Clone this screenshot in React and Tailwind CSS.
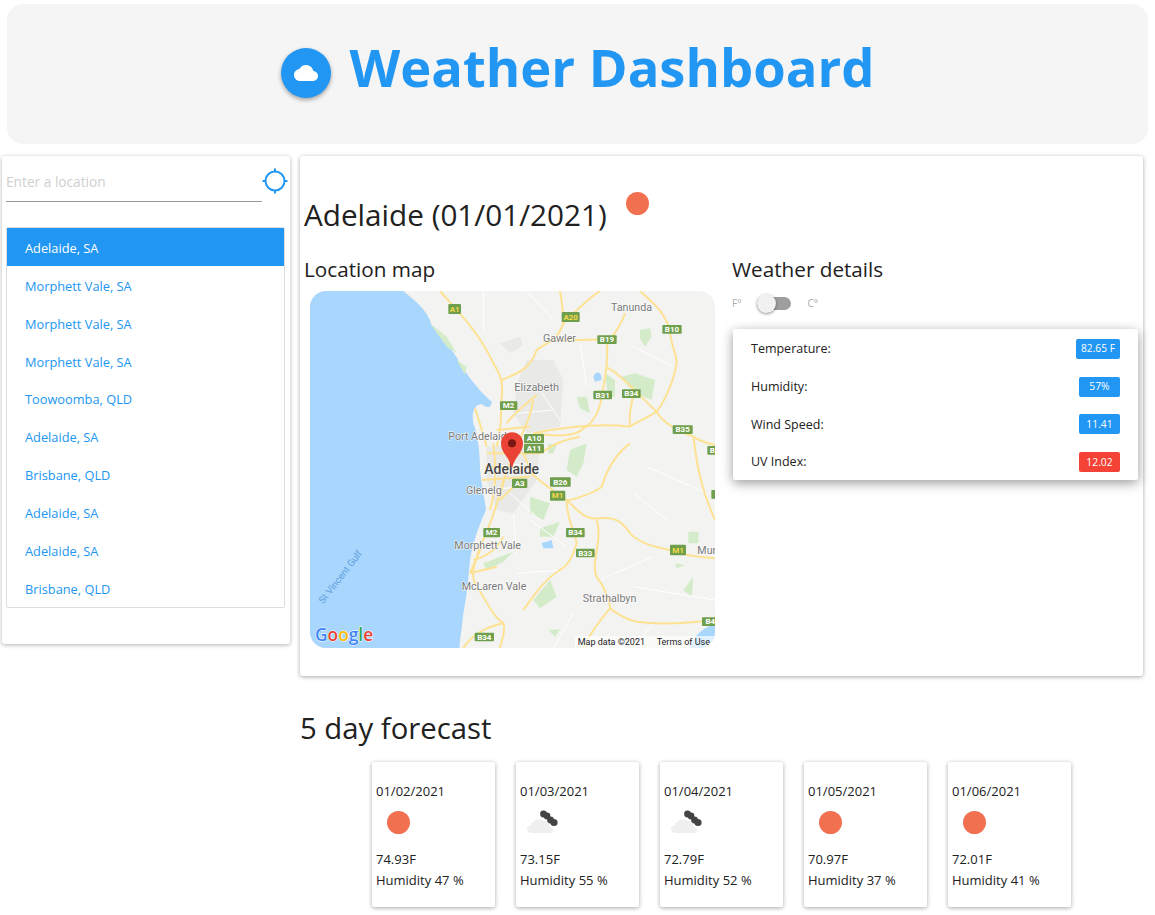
const locations = ['Adelaide, SA', 'Morphett Vale, SA', 'Morphett Vale, SA', 'Morphett Vale, SA', 'Toowoomba, QLD', 'Adelaide, SA', 'Brisbane, QLD', 'Adelaide, SA', 'Adelaide, SA', 'Brisbane, QLD']

const forecast = [
  { date: '01/02/2021', temp: '74.93F', humidity: 47, icon: 'sun' },
  { date: '01/03/2021', temp: '73.15F', humidity: 55, icon: 'cloud' },
  { date: '01/04/2021', temp: '72.79F', humidity: 52, icon: 'cloud' },
  { date: '01/05/2021', temp: '70.97F', humidity: 37, icon: 'sun' },
  { date: '01/06/2021', temp: '72.01F', humidity: 41, icon: 'sun' },
]

const details = [
  { label: 'Temperature:', value: '82.65 F', width: 'w-[44px]', color: 'bg-[#2196f3]' },
  { label: 'Humidity:', value: '57%', width: 'w-[41px]', color: 'bg-[#2196f3]' },
  { label: 'Wind Speed:', value: '11.41', width: 'w-[41px]', color: 'bg-[#2196f3]' },
  { label: 'UV Index:', value: '12.02', width: 'w-[41px]', color: 'bg-[#f44336]' },
]

const shields = [
  ['A1', 445, 72, 38, 30, 1], ['A20', 785, 96, 54, 30, 1], ['B19', 892, 166, 58, 26], ['B10', 1087, 135, 58, 26],
  ['B31', 880, 332, 56, 26], ['B34', 966, 328, 56, 26], ['M2', 600, 364, 52, 26], ['B35', 1118, 436, 60, 26],
  ['A10', 672, 462, 60, 28], ['A11', 672, 492, 60, 28], ['A3', 636, 596, 46, 28], ['B26', 750, 592, 62, 28],
  ['M1', 750, 632, 46, 30, 1], ['M2', 550, 744, 50, 28], ['B34', 798, 744, 56, 28], ['B33', 828, 806, 56, 26],
  ['M1', 1110, 794, 48, 32, 1], ['B34', 524, 1058, 58, 26], ['B4', 1206, 1012, 50, 26], ['B', 1222, 498, 30, 26], ['', 1234, 630, 20, 26],
]

const labels = [
  ['Tanunda', 933, 93, 32], ['Gawler', 729, 185, 32], ['Elizabeth', 643, 333, 33], ['Port Adelaide', 445, 481, 32],
  ['Glenelg', 498, 643, 32], ['Morphett Vale', 463, 806, 32], ['McLaren Vale', 485, 930, 32], ['Strathalbyn', 848, 966, 32], ['Mur', 1192, 823, 32],
]

const roads = [
  'M420 33 C470 90 530 150 570 230 C590 270 610 290 606 340 C600 390 610 430 590 500',
  'M606 300 C650 280 690 270 710 210 C730 190 770 190 790 130 C790 90 785 60 780 33',
  'M790 130 C830 90 860 60 900 33',
  'M730 185 C790 180 860 180 920 178 C925 230 920 270 905 350 C900 390 880 430 850 445',
  'M975 100 C960 150 930 170 920 200',
  'M1020 33 C1060 70 1090 90 1110 150 C1110 190 1130 220 1130 250 C1120 310 1090 370 1070 395 C1090 430 1130 450 1180 470 C1190 550 1200 620 1245 720',
  'M920 262 C960 280 1010 340 1070 395 C1030 420 1000 430 990 440 C900 430 800 440 700 460',
  'M990 440 C985 400 995 370 1000 345',
  'M1180 470 C1210 490 1230 490 1245 495',
  'M990 490 C950 520 920 570 905 620 C880 640 850 650 800 662',
  'M700 585 C740 620 770 640 800 660 C840 700 860 720 900 715 C950 710 970 730 990 760 C1020 790 1060 800 1110 810 C1160 830 1200 830 1245 835',
  'M800 662 C800 720 830 770 830 790 C820 830 800 860 780 870 C730 900 700 950 670 990',
  'M890 720 C910 780 870 850 890 890 C920 930 930 970 930 985 C950 1000 980 1020 1010 1025 C1080 1035 1150 1030 1245 1020',
  'M930 985 C900 1020 870 1060 850 1104',
  'M610 600 C590 680 570 740 540 800 C520 860 510 890 530 920 C560 960 570 1000 610 1030 C620 1060 600 1090 600 1104',
  'M610 1030 C560 1040 520 1060 490 1104',
  'M560 500 C540 430 530 400 525 385',
  'M700 360 C690 420 670 450 640 520 C620 570 610 600 600 650',
  'M700 460 C760 470 830 470 850 445',
  'M720 520 C780 480 800 480 840 470',
  'M560 520 L720 520', 'M555 560 L700 565', 'M545 600 L690 590', 'M580 490 C590 560 590 620 570 690',
  'M620 430 C640 400 680 370 710 345', 'M590 450 L690 440', 'M600 660 L640 620', 'M670 520 L700 590',
  'M520 840 C560 830 590 810 610 770', 'M510 880 L590 860', 'M545 800 L510 880',
]

const minorRoads = [
  'M550 33 L550 150', 'M680 33 L760 120', 'M840 190 L860 320', 'M1000 200 L1120 260', 'M1040 560 L1220 640', 'M1000 640 L1100 720',
  'M900 900 L1060 830', 'M690 720 L800 800', 'M650 880 L790 870', 'M1000 920 L1245 960', 'M820 1000 L760 1104', 'M1060 1030 L1000 1104',
  'M630 640 L720 720', 'M640 700 L650 820', 'M650 400 L760 390', 'M720 330 L780 420', 'M580 560 L690 550', 'M570 630 L660 620',
]

const parks = [
  'M1020 150 L1050 145 L1055 170 L1035 200 L1020 175Z', 'M965 290 L1005 280 L1065 300 L1055 360 L1020 345 L985 320Z', 'M915 280 L945 300 L945 350 L925 355 Z',
  'M830 350 L860 350 L870 400 L840 385Z', 'M745 490 L770 495 L760 520 L745 520Z', 'M810 510 L860 490 L850 550 L830 590 L800 570Z', 'M690 650 L750 670 L730 720 L690 700Z',
  'M720 745 L780 725 L760 770 L720 770Z', 'M1165 755 L1195 755 L1195 790 L1165 790Z', 'M1150 930 L1180 890 L1175 950Z', 'M700 960 L750 900 L770 950 L720 985Z',
  'M745 1050 L780 1048 L765 1070Z', 'M550 850 L640 815 L610 845 L560 870Z', 'M1125 850 L1155 855 L1130 865Z', 'M390 130 L440 170 L470 220 L440 200Z', 'M470 240 L500 260 L495 285 Z',
]

const greys = [
  'M600 190 L660 170 L670 195 L630 220Z', 'M680 240 L760 240 L790 300 L780 440 L680 460 L640 400 L650 310Z', 'M560 500 L720 490 L710 600 L640 700 L590 690 L560 600Z',
]

function CloudGlyph({ className }) {
  return (
    <svg viewBox="0 0 24 24" className={className} fill="currentColor">
      <path d="M19.35 10.04C18.67 6.59 15.64 4 12 4 9.11 4 6.6 5.64 5.35 8.04 2.34 8.36 0 10.91 0 14c0 3.31 2.69 6 6 6h13c2.76 0 5-2.24 5-5 0-2.64-2.05-4.78-4.65-4.96z" />
    </svg>
  )
}

function WeatherIcon({ type }) {
  if (type === 'sun') {
    return (
      <div className="w-[44px] h-[40px] flex items-center justify-center">
        <div className="w-[23px] h-[23px] rounded-full bg-[#f0704f]" />
      </div>
    )
  }
  return (
    <svg viewBox="0 0 44 40" className="w-[44px] h-[40px]">
      <path d="M12 31 C6 31 5 24 11 23 C12.5 19 17 16 21 18 C26 18 29 21 29 25 C33 25 35 31 30 31Z" fill="#efefef" />
      <g fill="#444444">
        <circle cx="23.5" cy="12" r="3.4" />
        <circle cx="27" cy="14" r="3.4" />
        <circle cx="30.5" cy="18" r="3.4" />
        <circle cx="34" cy="20.5" r="3.6" />
      </g>
    </svg>
  )
}

function AdelaideMap() {
  return (
    <svg viewBox="30 33 1215 1071" className="block w-full h-full" fontFamily="Roboto, sans-serif">
      <rect x="30" y="33" width="1215" height="1071" fill="#f3f3f1" />
      <path d="M30 33 L310 33 C340 60 380 85 395 135 C420 170 460 210 480 250 C510 300 545 340 575 365 C575 385 560 385 545 372 C520 375 515 400 520 430 C535 470 540 520 540 570 C545 620 555 660 558 690 C540 730 520 780 510 840 C505 900 500 950 490 1000 C485 1050 480 1080 478 1104 L30 1104 Z" fill="#a8d6fd" />
      <path d="M1180 1080 C1200 1050 1225 1040 1245 1030 L1245 1104 L1170 1104Z" fill="#a8d6fd" />
      <path d="M880 290 C890 270 905 275 905 300 L885 305Z M725 790 L755 780 L760 805 L730 805Z" fill="#a8d6fd" />
      {greys.map((d, i) => <path key={i} d={d} fill="#e9e9e7" />)}
      {parks.map((d, i) => <path key={i} d={d} fill="#d3ebc9" />)}
      {minorRoads.map((d, i) => <path key={i} d={d} stroke="#ffffff" strokeWidth="3" fill="none" />)}
      {roads.map((d, i) => <path key={i} d={d} stroke="#fde293" strokeWidth="6" fill="none" />)}
      {labels.map(([text, x, y, size]) => (
        <text key={text} x={x} y={y} fontSize={size} fill="#777777" stroke="#ffffff" strokeWidth="3" paintOrder="stroke">{text}</text>
      ))}
      <text x="553" y="582" fontSize="42" fontWeight="500" fill="#444444" stroke="#ffffff" strokeWidth="3" paintOrder="stroke">Adelaide</text>
      <text x="0" y="0" fontSize="29" fill="#5f9fe0" transform="translate(70 972) rotate(-52)">St Vincent Gulf</text>
      {shields.map(([text, x, y, w, h, yellow], i) => (
        <g key={i}>
          <rect x={x} y={y} width={w} height={h} rx="3" fill="#6f9f4c" />
          <text x={x + w / 2} y={y + h / 2 + 8} textAnchor="middle" fontSize="24" fontWeight="700" fill={yellow ? '#f5d94a' : '#ffffff'}>{text}</text>
        </g>
      ))}
      <path d="M636 565 C628 530 603 520 603 490 C603 470 618 457 636 457 C654 457 669 470 669 490 C669 520 644 530 636 565Z" fill="#ea4335" />
      <circle cx="636" cy="490" r="12" fill="#7b1610" />
      <text x="45" y="1083" fontSize="52" fontWeight="600" fontFamily="'Open Sans', sans-serif" stroke="#ffffff" strokeWidth="3" paintOrder="stroke">
        <tspan fill="#4285f4">G</tspan><tspan fill="#ea4335">o</tspan><tspan fill="#fbbc05">o</tspan><tspan fill="#4285f4">g</tspan><tspan fill="#34a853">l</tspan><tspan fill="#ea4335">e</tspan>
      </text>
      <rect x="825" y="1068" width="420" height="36" fill="#ffffff" fillOpacity="0.65" />
      <text x="833" y="1095" fontSize="27" fill="#222222">Map data ©2021</text>
      <text x="1070" y="1095" fontSize="27" fill="#222222">Terms of Use</text>
    </svg>
  )
}

export default function App() {
  return (
    <div className="w-[1155px] h-[915px] overflow-hidden bg-white text-[#212121] font-['Open_Sans','Noto_Sans',sans-serif]">
      <header className="ml-[7px] mt-[4px] w-[1141px] h-[140px] rounded-2xl bg-[#f5f5f5] flex items-center justify-center">
        <div className="w-[50px] h-[50px] -mt-[2px] rounded-full bg-[#2196f3] shadow-[0_2px_4px_rgba(0,0,0,0.35)] flex items-center justify-center text-white">
          <CloudGlyph className="w-[24px] h-[24px]" />
        </div>
        <h1 className="ml-[19px] -mt-[14px] text-[52.5px] leading-none font-bold text-[#2196f3]">Weather Dashboard</h1>
      </header>

      <div className="flex items-start mt-[12px]">
        <aside className="ml-[2px] w-[288px] h-[488px] bg-white rounded-[3px] shadow-[0_1px_4px_rgba(0,0,0,0.3)] px-[4px] pt-[10px]">
          <div className="flex items-start">
            <div className="w-[256px] shrink-0 h-[36px] border-b border-[#999999] text-[13.7px] leading-[32px] text-[#cfcfcf]">Enter a location</div>
            <svg viewBox="0 0 26 26" className="w-[26px] h-[26px] shrink-0 mt-[2px]" fill="none" stroke="#2196f3" strokeWidth="2">
              <circle cx="13" cy="13" r="9.5" />
              <path d="M13 0.5v3M13 22.5v3M0.5 13h3M22.5 13h3" />
            </svg>
          </div>
          <ul className="mt-[25px] w-[279px] border border-[#dddddd] rounded-[2px]">
            {locations.map((name, i) => (
              <li key={i} className={`h-[37.9px] pl-[18px] pt-[3px] flex items-center text-[12.8px] ${i === 0 ? 'bg-[#2196f3] text-white' : 'text-[#2196f3]'}`}>{name}</li>
            ))}
          </ul>
        </aside>

        <main className="ml-[10px] w-[843px]">
          <section className="h-[520px] bg-white rounded-[3px] shadow-[0_1px_4px_rgba(0,0,0,0.35)] pl-[4px] pt-[37px]">
            <div className="flex items-start">
              <h2 className="text-[29.7px] leading-[44px]">Adelaide (01/01/2021)</h2>
              <div className="ml-[19px] -mt-[1px] w-[23px] h-[23px] rounded-full bg-[#f0704f]" />
            </div>
            <div className="flex mt-[19px]">
              <div className="w-[428px]">
                <h3 className="text-[20.7px] leading-[26px]">Location map</h3>
                <div className="ml-[6px] mt-[9px] w-[405px] h-[357px] rounded-2xl overflow-hidden">
                  <AdelaideMap />
                </div>
              </div>
              <div className="flex-1">
                <h3 className="text-[20.7px] leading-[26px]">Weather details</h3>
                <div className="flex items-center h-[22px] mt-[10px] text-[10px] text-[#aaaaaa]">
                  <span>F°</span>
                  <div className="relative ml-[16px] w-[34px] h-[13px] rounded-full bg-[#9e9e9e]">
                    <div className="absolute left-0 -top-[3px] w-[19px] h-[19px] rounded-full bg-[#f1f1f1] shadow-[0_1px_3px_rgba(0,0,0,0.45)]" />
                  </div>
                  <span className="ml-[16px]">C°</span>
                </div>
                <div className="ml-[1px] mt-[15px] w-[405px] h-[151px] bg-white rounded-[2px] shadow-[0_3px_12px_rgba(0,0,0,0.4)] px-[18px] pt-[1px]">
                  {details.map(row => (
                    <div key={row.label} className="h-[37.8px] flex items-center justify-between text-[12.5px]">
                      <span className="pt-[1px]">{row.label}</span>
                      <span className={`${row.width} ${row.color} h-[20px] rounded-[2px] flex items-center justify-center text-[10.3px] text-white`}>{row.value}</span>
                    </div>
                  ))}
                </div>
              </div>
            </div>
          </section>

          <h2 className="mt-[30px] text-[29.3px] leading-[44px]">5 day forecast</h2>
          <div className="flex gap-[21px] ml-[72px] mt-[12px]">
            {forecast.map(day => (
              <div key={day.date} className="w-[123px] h-[145px] bg-white rounded-[2px] shadow-[0_1px_4px_rgba(0,0,0,0.35)] pl-[4px] pt-[19px] text-[13px] leading-[20px]">
                <div>{day.date}</div>
                <div className="mt-[1px]"><WeatherIcon type={day.icon} /></div>
                <div className="mt-[7px] leading-[21px]">{day.temp}</div>
                <div className="leading-[21px]">Humidity {day.humidity} %</div>
              </div>
            ))}
          </div>
        </main>
      </div>
    </div>
  )
}
